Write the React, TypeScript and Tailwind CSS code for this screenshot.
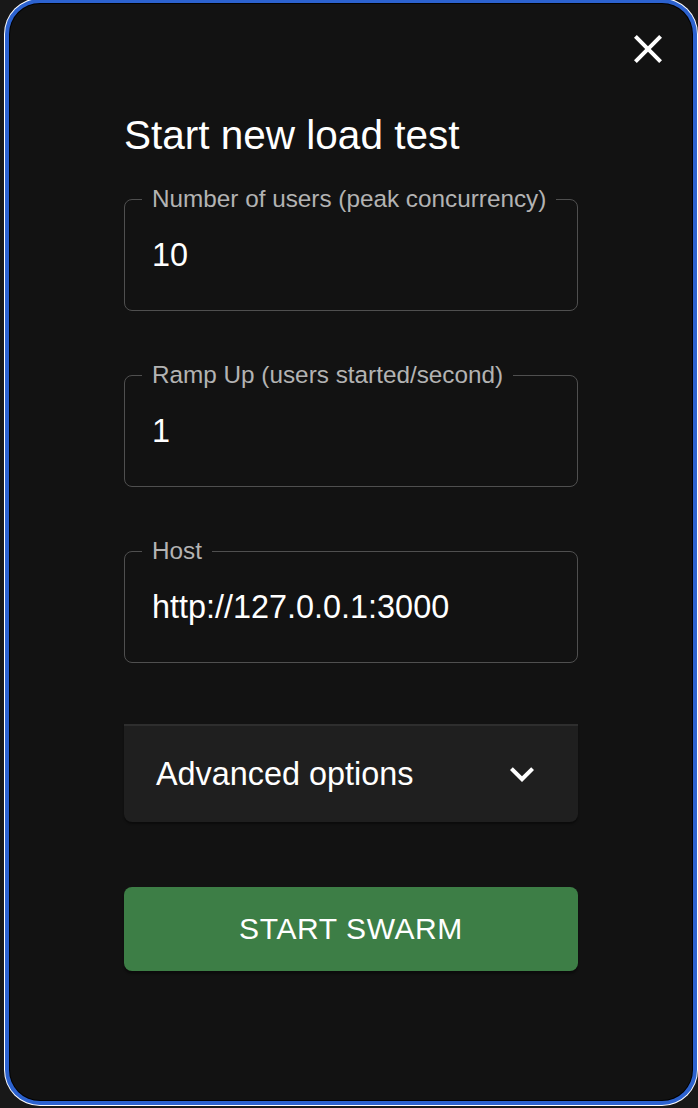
import React from "react";

function Field({ label, value }: { label: string; value: string }) {
  return (
    <div className="relative h-[112px] rounded-[8px] border border-[#4f4f4f] flex items-center px-[27px]">
      <span className="absolute left-[17px] top-[-15px] px-[10px] bg-[#121212] text-[24.3px] leading-[28px] text-[#b3b3b3] whitespace-nowrap">
        {label}
      </span>
      <span className="text-[32.4px] leading-[36px] text-white">{value}</span>
    </div>
  );
}

export default function App() {
  return (
    <div
      className="w-[698px] h-[1108px] bg-[#181818] overflow-hidden"
      style={{ fontFamily: '"Liberation Sans", Arial, sans-serif' }}
    >
      <div className="ml-[4px] mt-[-2px] w-[694px] h-[1108px] rounded-[36px] bg-white p-[1px]">
        <div className="w-full h-full rounded-[35px] bg-[#2c62cf] p-[4px]">
          <div className="w-full h-full rounded-[31px] bg-black p-[1px]">
            <div className="relative w-full h-full rounded-[30px] bg-[#121212] pt-[107px] pl-[114px] pr-[114px] flex flex-col">
              <button className="absolute top-[21px] right-[20px] w-[48px] h-[48px] flex items-center justify-center">
                <svg viewBox="0 0 24 24" width="48" height="48" fill="white">
                  <path d="M19 6.41 17.59 5 12 10.59 6.41 5 5 6.41 10.59 12 5 17.59 6.41 19 12 13.41 17.59 19 19 17.59 13.41 12z" />
                </svg>
              </button>
              <h2 className="text-[40.5px] leading-[48px] text-white">Start new load test</h2>
              <div className="mt-[40px] flex flex-col gap-[64px]">
                <Field label="Number of users (peak concurrency)" value="10" />
                <Field label="Ramp Up (users started/second)" value="1" />
                <Field label="Host" value="http://127.0.0.1:3000" />
              </div>
              <div className="mt-[61px] h-[98px] rounded-b-[8px] bg-[#1f1f1f] border-t-2 border-[#2e2e2e] shadow-[0_2px_2px_rgba(0,0,0,0.4)] flex items-center justify-between pl-[32px] pr-[32px]">
                <span className="text-[32.4px] leading-[36px] text-white">Advanced options</span>
                <svg viewBox="0 0 24 24" width="48" height="48" fill="white">
                  <path d="M16.59 8.59 12 13.17 7.41 8.59 6 10l6 6 6-6z" />
                </svg>
              </div>
              <button className="mt-[65px] h-[84px] rounded-[8px] bg-[#3d7e46] shadow-[0_3px_2px_rgba(0,0,0,0.35)] text-white text-[30px] leading-[36px] tracking-[0.6px] uppercase flex items-center justify-center">
                Start Swarm
              </button>
            </div>
          </div>
        </div>
      </div>
    </div>
  );
}
